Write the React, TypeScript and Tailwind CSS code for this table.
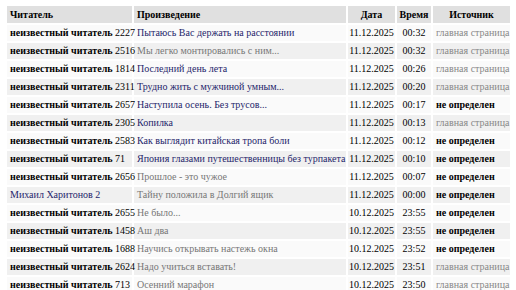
import React from 'react';

type Row = {
  reader: string;
  anon: boolean;
  title: string;
  link: boolean;
  date: string;
  time: string;
  main: boolean;
};

const rows: Row[] = [
  { reader: '2227', anon: true, title: 'Пытаюсь Вас держать на расстоянии', link: true, date: '11.12.2025', time: '00:32', main: true },
  { reader: '2516', anon: true, title: 'Мы легко монтировались с ним...', link: false, date: '11.12.2025', time: '00:32', main: true },
  { reader: '1814', anon: true, title: 'Последний день лета', link: true, date: '11.12.2025', time: '00:26', main: true },
  { reader: '2311', anon: true, title: 'Трудно жить с мужчиной умным...', link: true, date: '11.12.2025', time: '00:20', main: true },
  { reader: '2657', anon: true, title: 'Наступила осень. Без трусов...', link: true, date: '11.12.2025', time: '00:17', main: false },
  { reader: '2305', anon: true, title: 'Копилка', link: true, date: '11.12.2025', time: '00:13', main: true },
  { reader: '2583', anon: true, title: 'Как выглядит китайская тропа боли', link: true, date: '11.12.2025', time: '00:12', main: false },
  { reader: '71', anon: true, title: 'Япония глазами путешественницы без турпакета', link: true, date: '11.12.2025', time: '00:10', main: false },
  { reader: '2656', anon: true, title: 'Прошлое - это чужое', link: false, date: '11.12.2025', time: '00:07', main: false },
  { reader: 'Михаил Харитонов 2', anon: false, title: 'Тайну положила в Долгий ящик', link: false, date: '11.12.2025', time: '00:00', main: false },
  { reader: '2655', anon: true, title: 'Не было...', link: false, date: '10.12.2025', time: '23:55', main: false },
  { reader: '1458', anon: true, title: 'Аш два', link: false, date: '10.12.2025', time: '23:55', main: false },
  { reader: '1688', anon: true, title: 'Научись открывать настежь окна', link: false, date: '10.12.2025', time: '23:52', main: false },
  { reader: '2624', anon: true, title: 'Надо учиться вставать!', link: false, date: '10.12.2025', time: '23:51', main: true },
  { reader: '713', anon: true, title: 'Осенний марафон', link: false, date: '10.12.2025', time: '23:50', main: true },
];

const cell = 'h-[16px] whitespace-nowrap p-0 font-["Liberation_Serif","Times_New_Roman","DejaVu_Serif",serif]';
const head = 'h-[17px] whitespace-nowrap p-0 font-bold font-["Liberation_Serif","Times_New_Roman","DejaVu_Serif",serif]';

export default function App() {
  return (
    <div className="min-h-screen bg-white pl-[5px] pt-[4px]">
      <table className="w-[507px] table-fixed border-separate border-spacing-[2px] text-[10px] leading-[12px] text-black">
        <colgroup>
          <col className="w-[125px]" />
          <col className="w-[212px]" />
          <col className="w-[47px]" />
          <col className="w-[34px]" />
          <col className="w-[77px]" />
        </colgroup>
        <thead>
          <tr className="bg-[#e0e0e0]">
            <th className={`${head} pl-[3px] text-left`}>Читатель</th>
            <th className={`${head} pl-[3px] text-left`}>Произведение</th>
            <th className={`${head} text-center`}>Дата</th>
            <th className={`${head} text-center`}>Время</th>
            <th className={`${head} text-center`}>Источник</th>
          </tr>
        </thead>
        <tbody>
          {rows.map((r, i) => (
            <tr key={i} className={i % 2 === 0 ? 'bg-[#fafafa]' : 'bg-[#f0f0f0]'}>
              <td className={`${cell} pl-[3px]`}>
                {r.anon ? (
                  <>
                    <b>неизвестный читатель</b> {r.reader}
                  </>
                ) : (
                  <span className="text-[#1f1f6b]">{r.reader}</span>
                )}
              </td>
              <td className={`${cell} pl-[3px] ${r.link ? 'text-[#1f1f6b]' : 'text-[#777]'}`}>{r.title}</td>
              <td className={`${cell} text-center`}>{r.date}</td>
              <td className={`${cell} text-center`}>{r.time}</td>
              <td className={`${cell} pl-[3px] ${r.main ? 'text-[#888]' : 'font-bold'}`}>
                {r.main ? 'главная страница' : 'не определен'}
              </td>
            </tr>
          ))}
        </tbody>
      </table>
    </div>
  );
}
